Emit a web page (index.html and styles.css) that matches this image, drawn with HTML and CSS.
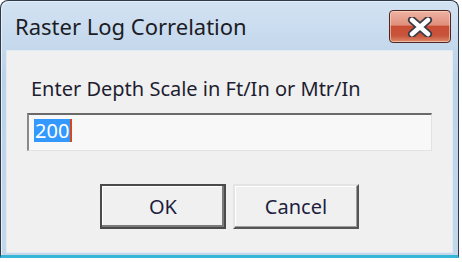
FILE: index.html
```html
<!DOCTYPE html>
<html lang="en">
<head>
  <meta charset="UTF-8">
  <title>Raster Log Correlation</title>
  <link rel="stylesheet" href="styles.css">
</head>
<body>

<div class="window">
  <div class="titlebar">
    <span class="title">Raster Log Correlation</span>
    <button class="close" title="Close">
      <svg width="26" height="20" viewBox="0 0 26 20">
        <path d="M5 3 L21 17 M21 3 L5 17" stroke="#3a3a44" stroke-width="8" stroke-linecap="round"/>
        <path d="M5 3 L21 17 M21 3 L5 17" stroke="#ffffff" stroke-width="4.5" stroke-linecap="round"/>
      </svg>
    </button>
  </div>

  <div class="client">
    <label class="prompt" for="scale">Enter Depth Scale in Ft/In or Mtr/In</label>
    <div class="field" id="scale">
      <span class="selected">200</span><span class="caret"></span>
    </div>
    <div class="buttons">
      <button class="btn btn-default">OK</button>
      <button class="btn">Cancel</button>
    </div>
  </div>
</div>

</body>
</html>
```

FILE: styles.css
```css
/* BASE */
* {
  box-sizing: border-box;
}
body {
  margin: 0;
  background: #fff;
  font-family: "Noto Sans", "Open Sans", sans-serif;
}

/* WINDOW FRAME */
.window {
  width: 459px;
  height: 258px;
  display: flex;
  flex-direction: column;
  border: 1px solid #2e3a48;
  border-bottom: 3px solid #35b6d6;
  border-radius: 8px 8px 0 0;
  padding: 0 5px 2px 5px;
  background: linear-gradient(#d2e2f2, #bcd2e9 30%, #c4d8ec);
  box-shadow: inset 1px 1px 0 #e6eef8;
}
.titlebar {
  height: 49px;
  display: flex;
  align-items: flex-start;
  justify-content: space-between;
}
.title {
  margin: 10px 0 0 9px;
  font-size: 22px;
  color: #1c1c24;
}
.close {
  width: 62px;
  height: 33px;
  margin: 9px 2px 0 0;
  padding: 0;
  display: flex;
  align-items: center;
  justify-content: center;
  border: 1px solid #4c2622;
  border-radius: 4px;
  background: linear-gradient(#eeb3a4, #e08f7c 45%, #c94d35 50%, #c8553c 80%, #dc8a6c);
  box-shadow: inset 0 0 0 1px rgba(255, 220, 200, 0.6);
}

/* CLIENT AREA */
.client {
  flex: 1;
  display: flex;
  flex-direction: column;
  padding: 26px 20px 0 20px;
  background: #f0f0f0;
  border: 1px solid #e2eaf4;
}
.prompt {
  padding-left: 4px;
  font-size: 20px;
  line-height: 24px;
  color: #1e1e30;
}
.field {
  height: 38px;
  margin-top: 12px;
  padding: 4px 5px;
  display: flex;
  align-items: stretch;
  background: #f8f8f8;
  border-style: solid;
  border-width: 2px 1px 1px 2px;
  border-color: #6a6a6a #e2e2e2 #e2e2e2 #8a8a8a;
}
.selected {
  padding: 0 1px;
  background: #3399ff;
  color: #fff;
  font-size: 20px;
  line-height: 23px;
  height: 23px;
}
.caret {
  width: 2px;
  height: 23px;
  background: #d04a20;
}

/* BUTTONS */
.buttons {
  display: flex;
  justify-content: center;
  gap: 7px;
  margin-top: 33px;
}
.btn {
  width: 126px;
  height: 45px;
  padding: 0;
  font-family: inherit;
  font-size: 20px;
  color: #1e1e40;
  background: #f0f0f0;
  border: 2px solid;
  border-color: #e4e4e4 #555 #555 #e4e4e4;
  box-shadow: inset -1px -1px 0 #a0a0a0, inset 1px 1px 0 #fff;
}
.btn-default {
  border-color: #4a4a4a;
  box-shadow: inset -2px -2px 0 #7a7a7a, inset 1px 1px 0 #fff;
}
```
